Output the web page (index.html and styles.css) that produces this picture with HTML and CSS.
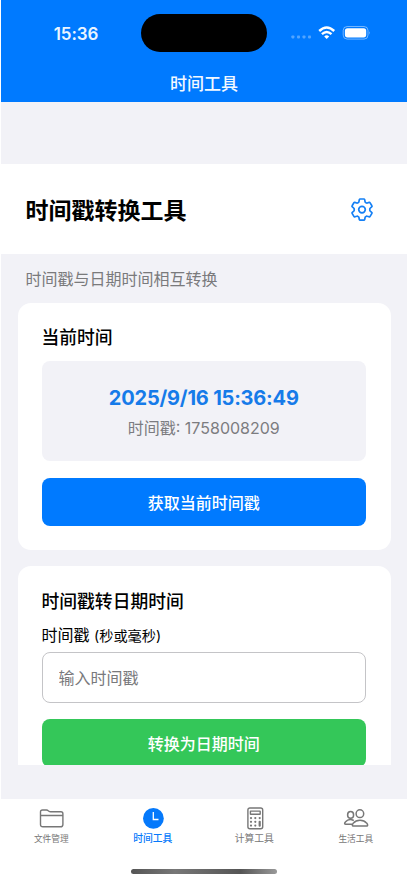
FILE: index.html
```html
<!DOCTYPE html>
<html lang="zh-CN">
<head>
<meta charset="utf-8">
<meta name="viewport" content="width=device-width, initial-scale=1">
<title>时间工具</title>
<link rel="stylesheet" href="styles.css">
</head>
<body>
<div class="screen">
  <header class="header">
    <div class="status">
      <div class="clock">15:36</div>
      <div class="island"></div>
      <div class="indicators">
        <svg width="80" height="16" viewBox="0 0 80 16">
          <g fill="#fff" opacity=".32"><rect x="0.4" y="10.4" width="3" height="3" rx=".8"/><rect x="6" y="10.4" width="3" height="3" rx=".8"/><rect x="11.500" y="10.400" width="3" height="3" rx=".8"/><rect x="17" y="10.400" width="3" height="3" rx=".8"/></g>
          <g fill="none" stroke="#fff" stroke-width="2.400"><path d="M28.200 6Q35.700-1 43.200 6"/><path d="M30.900 9.200Q35.700 4.900 40.500 9.200"/></g>
          <path d="M33.200 11.400Q35.700 9.200 38.200 11.400L35.700 13.900Z" fill="#fff"/>
          <rect x="52.200" y="1.500" width="24.800" height="12.600" rx="4" fill="none" stroke="#fff" stroke-opacity=".45"/>
          <rect x="53.900" y="3.200" width="21.300" height="9.200" rx="2.600" fill="#fff"/>
          <path d="M78.200 6.200q1.500 1.600 0 3.300z" fill="#fff" opacity=".5"/>
        </svg>
      </div>
    </div>
    <div class="nav-title">时间工具</div>
  </header>

  <main class="content">
    <section class="title-bar">
      <h1>时间戳转换工具</h1>
      <svg class="gear" width="24" height="24" viewBox="0 0 24 24" fill="none" stroke="#1580f5" stroke-width="1.700" stroke-linejoin="round">
        <path d="M9.300 1.700Q9.500 1 10.200 1h3.600q.7 0 .9.700l.4 2.100q.1.500.5.700l.8.400q.4.300.9.100l1.700-.6q.7-.3 1.100.4l1.800 3q.4.600-.2 1.100l-1.500 1.200q-.4.300-.4.800v1.400q0 .5.400.8l1.500 1.200q.6.500.2 1.100l-1.800 3q-.4.700-1.100.4l-1.700-.6q-.5-.2-.9.100l-.8.400q-.4.200-.5.700l-.4 2.100q-.2.700-.9.700h-3.600q-.7 0-.9-.7l-.4-2.100q-.1-.5-.5-.7l-.8-.4q-.4-.3-.9-.1l-1.700.6q-.7.300-1.100-.4l-1.800-3q-.4-.6.200-1.100l1.500-1.200q.4-.3.400-.8v-1.400q0-.5-.4-.8L2.300 8.900q-.6-.5-.2-1.100l1.800-3q.4-.7 1.100-.4l1.700.6q.5.200.9-.1l.8-.4q.4-.2.500-.7z"/>
        <circle cx="12" cy="11.600" r="3.300"/>
      </svg>
    </section>
    <p class="caption">时间戳与日期时间相互转换</p>

    <section class="card">
      <h2>当前时间</h2>
      <div class="now">
        <div class="date">2025/9/16 15:36:49</div>
        <div class="stamp">时间戳: <span>1758008209</span></div>
      </div>
      <button class="button">获取当前时间戳</button>
    </section>

    <section class="card">
      <h2 class="lower">时间戳转日期时间</h2>
      <label class="label" for="stamp">时间戳 <small>(秒或毫秒)</small></label>
      <input id="stamp" class="input" type="text" placeholder="输入时间戳">
      <button class="button green">转换为日期时间</button>
    </section>
  </main>

  <nav class="tabs">
    <div class="tab small">
      <svg width="26" height="24" viewBox="0 0 26 24" fill="none" stroke="#777" stroke-width="1.400">
        <path d="M1.500 17.400V5q0-2 2-2h4q1 0 1.800.7l.6.500q.7.600 1.700.6h10.300q2 0 2 2v10.600q0 2.400-2.400 2.400H3.900q-2.400 0-2.400-2.400zM1.500 8.500h22.400"/>
      </svg>
      <span>文件管理</span>
    </div>
    <div class="tab active">
      <svg width="26" height="24" viewBox="0 0 26 24">
        <circle cx="13.400" cy="11.400" r="10.400" fill="#0579fb"/>
        <path d="M13.300 4.900V12.500H18.500" fill="none" stroke="#fff" stroke-width="1.300"/>
      </svg>
      <span>时间工具</span>
    </div>
    <div class="tab">
      <svg width="26" height="24" viewBox="0 0 26 24" fill="none" stroke="#777" stroke-width="1.400">
        <rect x="5.900" y="1" width="14.800" height="20.700" rx="2"/>
        <rect x="8.400" y="4.100" width="9.800" height="3.200" rx=".3"/>
        <g fill="#777" stroke="none"><circle cx="9" cy="11.100" r="1.100"/><circle cx="13.300" cy="11.100" r="1.100"/><circle cx="17.700" cy="11.100" r="1.100"/><circle cx="9" cy="14.800" r="1.100"/><circle cx="13.300" cy="14.800" r="1.100"/><circle cx="9" cy="18.600" r="1.100"/><circle cx="13.300" cy="18.600" r="1.100"/><rect x="16.600" y="13.700" width="2.200" height="6" rx="1"/></g>
      </svg>
      <span>计算工具</span>
    </div>
    <div class="tab small">
      <svg width="26" height="24" viewBox="0 0 26 24" fill="none" stroke="#777" stroke-width="1.500" stroke-linejoin="round">
        <ellipse cx="16.900" cy="6.700" rx="3.800" ry="3.900"/>
        <path d="M10.300 19.100c-1.300 0-1.200-1.600.1-3 3.100-3.900 10.100-3.900 13.200 0 1.300 1.400 1.400 3 .1 3z"/>
        <ellipse cx="7.600" cy="7.900" rx="3" ry="3.300"/>
        <path d="M9 17.300H2.600c-1.400 0-1.100-1.500 0-2.600 2-2.300 5.500-2.600 8.200-1.200"/>
      </svg>
      <span>生活工具</span>
    </div>
  </nav>
  <div class="home"></div>
</div>
</body>
</html>
```
FILE: styles.css
```css
* { box-sizing: border-box; margin: 0; padding: 0; }
body { background: #fff; font-family: Inter, "Noto Sans CJK SC", sans-serif; color: #000; overflow: hidden; }
.screen { height: 883px; margin: 0 1px; display: flex; flex-direction: column; background: #fff; }
.header { height: 102px; flex: none; background: #007aff; color: #fff; }
.status { height: 66px; display: grid; grid-template-columns: 140px 126px 140px; align-items: center; }
.clock { padding: 1px 0 0 10px; text-align: center; font-size: 17px; font-weight: 600; letter-spacing: -.1px; color: #eaf5ff; }
.island { height: 38px; border-radius: 19px; background: #000; }
.indicators { padding-left: 24px; height: 16px; }
.indicators svg { display: block; }
.nav-title { height: 36px; line-height: 36px; text-align: center; font-size: 17px; font-weight: 500; color: #f2f8ff; }
.content { height: 663px; flex: none; overflow: hidden; padding-top: 62px; background: #f2f2f7; }
.title-bar { height: 90px; background: #fff; display: flex; align-items: center; justify-content: space-between; padding: 1px 33px 0 24.500px; }
h1 { font-size: 23px; line-height: 34px; font-weight: 700; padding-top: 2px; }
.caption { height: 49px; line-height: 51px; padding-left: 24.500px; font-size: 16px; color: #7a7a7c; }
.card { margin: 0 16.500px 16px 16.500px; padding: 24px 24.500px 24px 24px; border-radius: 13px; background: #fff; display: flex; flex-direction: column; }
.card:nth-of-type(2) { height: 247px; }
h2 { height: 20px; line-height: 22px; font-size: 17.800px; font-weight: 500; }
.lower { line-height: 24px; }
.now { height: 100px; margin-top: 14px; border-radius: 8px; background: #f2f2f7; display: flex; flex-direction: column; align-items: center; padding-top: 24px; }
.date { height: 26px; line-height: 26px; color: #167be9; font-size: 20px; font-weight: 700; letter-spacing: -.2px; white-space: nowrap; }
.stamp { margin-top: 4px; height: 26px; line-height: 26px; color: #7c7c80; font-size: 16px; white-space: nowrap; }
.button { height: 48px; margin-top: 17px; flex: none; border: 0; border-radius: 8px; background: #007aff; color: #fff; font: 500 16px/48px Inter, "Noto Sans CJK SC", sans-serif; padding-top: 1px; }
.green { margin-top: 16px; background: #34c759; }
.label { height: 24px; line-height: 24px; margin-top: 13px; font-size: 16px; }
.label small { font-size: 14.200px; }
.input { height: 51px; margin-top: 5px; padding: 0 16px; border: 1px solid #c4c4c7; border-radius: 8px; background: #fff; font: 16px Inter, "Noto Sans CJK SC", sans-serif; }
.input::placeholder { color: #79797c; }
.tabs { flex: none; height: 57px; border-top: 34px solid #f2f2f7; box-sizing: content-box; display: grid; grid-template-columns: repeat(4, 1fr); padding-top: 8px; }
.tab { display: flex; flex-direction: column; align-items: center; color: #777; font-size: 9.800px; line-height: 16px; }
.tab svg { display: block; flex: none; }
.tab span { margin-right: 1px; }
.small { font-size: 8.700px; }
.active { color: #0579fb; font-weight: 500; }
.home { width: 146px; height: 5px; margin: 5px auto 0 130px; border-radius: 3px; background: linear-gradient(90deg, #555, #777 30%, #555 75%, #999); }
```
